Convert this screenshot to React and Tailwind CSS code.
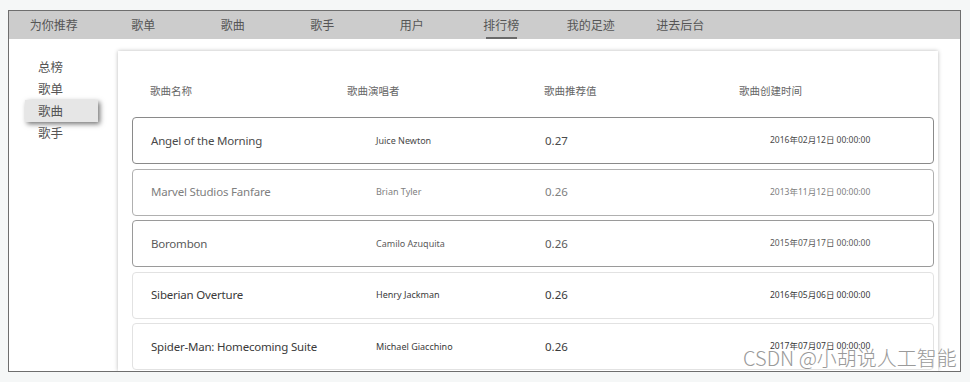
const NAV = ["为你推荐", "歌单", "歌曲", "歌手", "用户", "排行榜", "我的足迹", "进去后台"];
const SIDE = ["总榜", "歌单", "歌曲", "歌手"];

const SONGS = [
  { name: "Angel of the Morning", singer: "Juice Newton", score: "0.27", date: "2016年02月12日 00:00:00", border: "border-[#8a8a8a]", tone: "text-[#4a4a4a]" },
  { name: "Marvel Studios Fanfare", singer: "Brian Tyler", score: "0.26", date: "2013年11月12日 00:00:00", border: "border-[#b0b0b0]", tone: "text-[#808080]" },
  { name: "Borombon", singer: "Camilo Azuquita", score: "0.26", date: "2015年07月17日 00:00:00", border: "border-[#9a9a9a]", tone: "text-[#5a5a5a]" },
  { name: "Siberian Overture", singer: "Henry Jackman", score: "0.26", date: "2016年05月06日 00:00:00", border: "border-[#e2e2e2]", tone: "text-[#3a3a3a]" },
  { name: "Spider-Man: Homecoming Suite", singer: "Michael Giacchino", score: "0.26", date: "2017年07月07日 00:00:00", border: "border-[#e2e2e2]", tone: "text-[#3a3a3a]" },
];

const latin = { fontFamily: '"Noto Sans", "Noto Sans CJK SC", sans-serif' };

export default function App() {
  return (
    <div
      className="relative w-[970px] h-[382px] bg-[#f5f7f7] pt-[10px] pl-[8px] overflow-hidden"
      style={{ fontFamily: '"Noto Sans CJK SC", sans-serif' }}
    >
      <div className="w-[953px] h-[362px] border border-[#6e6e6e] bg-white overflow-hidden flex flex-col">
        {/* top nav */}
        <div className="h-[28px] bg-[#cccccc] flex shrink-0">
          {NAV.map((item, i) => (
            <div
              key={item}
              className="relative w-[89.5px] flex items-center justify-center text-[12px] text-[#555]"
            >
              {item}
              {i === 5 && (
                <div className="absolute bottom-0 left-[29px] w-[31px] h-[2px] bg-[#6a6a6a]" />
              )}
            </div>
          ))}
        </div>

        <div className="flex flex-1 min-h-0">
          {/* sidebar */}
          <div className="w-[109px] shrink-0 pt-[17px] pl-[16px]">
            {SIDE.map((item, i) => (
              <div
                key={item}
                className={
                  "h-[22px] w-[73px] pl-[13px] flex items-center text-[12.5px] text-[#555] " +
                  (i === 2 ? "bg-[#e6e6e6] shadow-[2px_2px_5px_rgba(0,0,0,0.55)]" : "")
                }
              >
                {item}
              </div>
            ))}
          </div>

          {/* card */}
          <div className="flex-1 mr-[22px] mt-[12px] bg-white shadow-[0_0_4px_rgba(0,0,0,0.28)] pt-[14px] pl-[14px] pr-[4px]">
            <div className="h-[52px] flex items-center text-[10.5px] text-[#666]">
              <div className="w-[215px] pl-[18px]">歌曲名称</div>
              <div className="w-[197px]">歌曲演唱者</div>
              <div className="w-[195px]">歌曲推荐值</div>
              <div>歌曲创建时间</div>
            </div>

            <div className="flex flex-col gap-[4.5px]">
              {SONGS.map((s) => (
                <div
                  key={s.name}
                  className={"h-[47px] shrink-0 flex items-center border rounded-[4px] " + s.border + " " + s.tone}
                  style={latin}
                >
                  <div className="w-[243px] pl-[18px] text-[11.5px] tracking-[-0.2px]">{s.name}</div>
                  <div className="w-[169px] text-[9px]">{s.singer}</div>
                  <div className="w-[225px] text-[11.5px]">{s.score}</div>
                  <div className="text-[8.5px]">{s.date}</div>
                </div>
              ))}
            </div>
          </div>
        </div>
      </div>

      {/* watermark */}
      <div
        className="absolute left-[743px] top-[348px] whitespace-nowrap text-[20px] leading-none text-[#9a9a9a] font-light"
        style={{ fontFamily: '"Noto Sans CJK SC", sans-serif', textShadow: "0 0 2px #fff" }}
      >
        CSDN @小胡说人工智能
      </div>
    </div>
  );
}
